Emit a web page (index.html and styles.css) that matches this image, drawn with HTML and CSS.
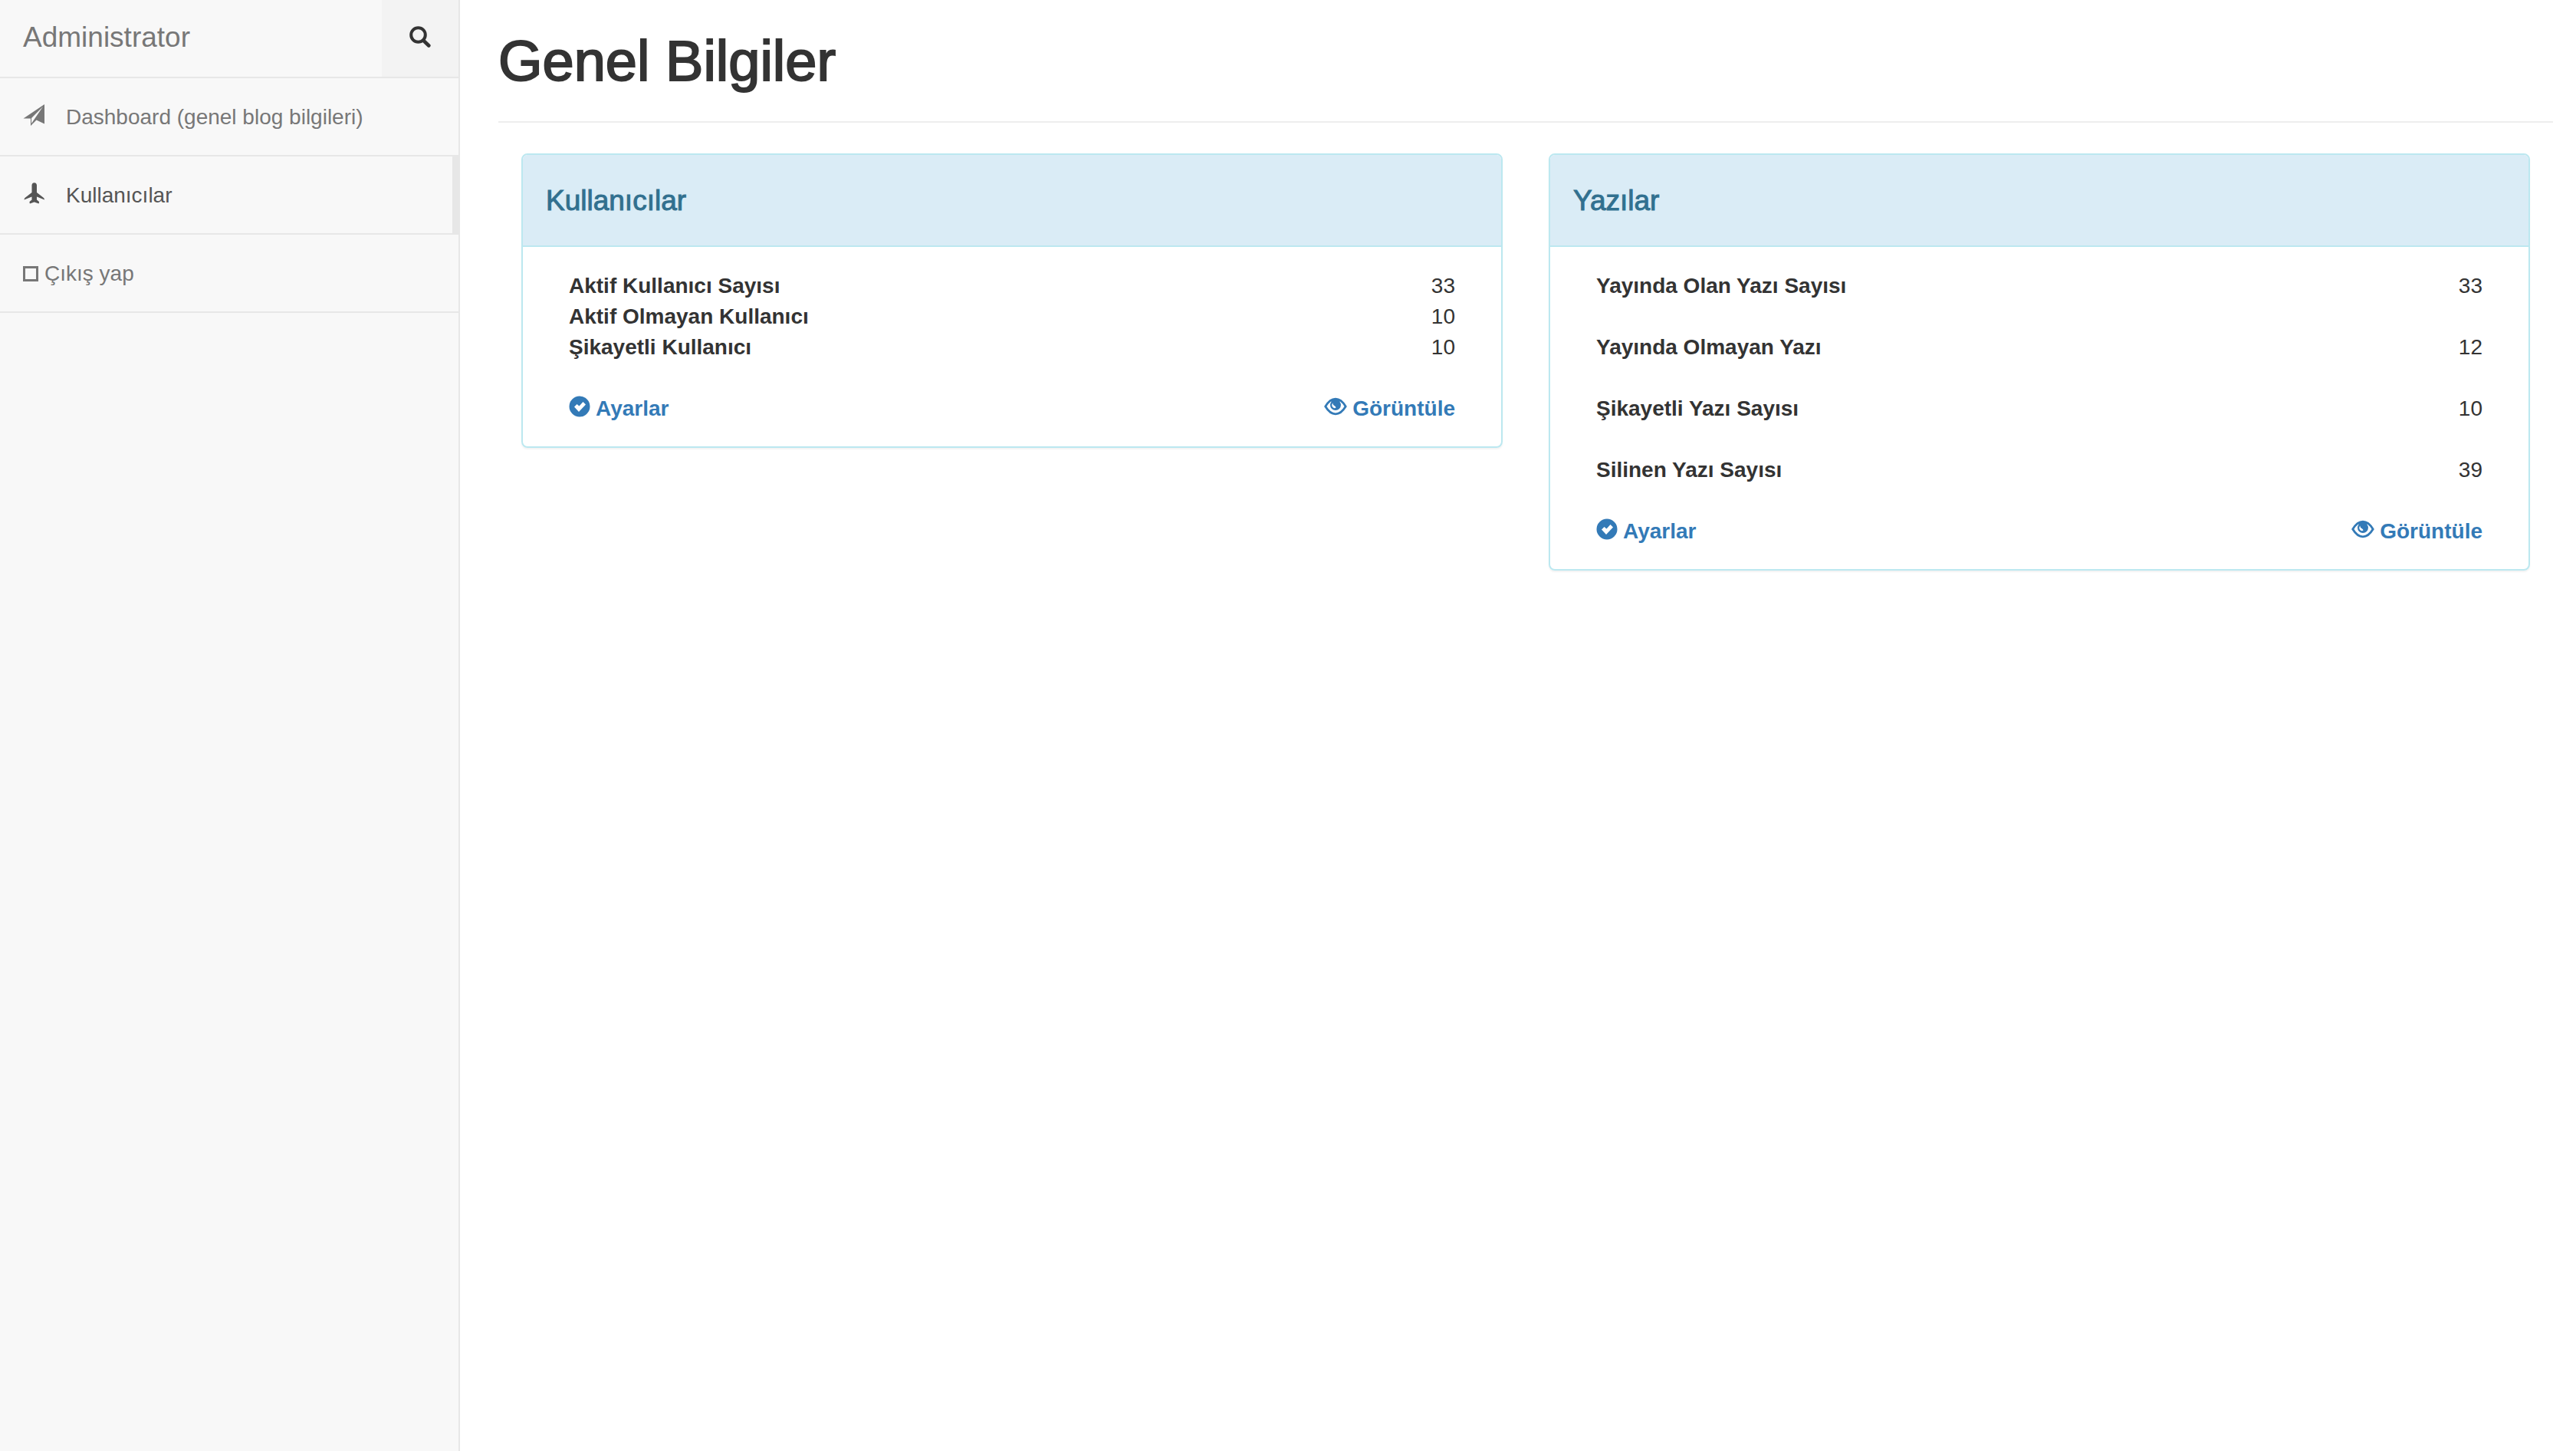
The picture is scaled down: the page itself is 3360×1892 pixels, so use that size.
FILE: index.html
```html
<!DOCTYPE html>
<html lang="tr">
<head>
<meta charset="utf-8">
<title>Genel Bilgiler</title>
<link rel="stylesheet" href="styles.css">
</head>
<body>
<svg class="sprite" aria-hidden="true">
  <symbol id="search" viewBox="0 0 28 28">
    <circle cx="11.500" cy="11.500" r="9.300" fill="none" stroke="currentColor" stroke-width="4"/>
    <path d="M18 18.500L25.300 25.500" fill="none" stroke="currentColor" stroke-width="4.600" stroke-linecap="round"/>
  </symbol>
  <symbol id="send" viewBox="0 0 28 28">
    <path d="M28 0V25.500L17.500 20.500L10 28V18.500L0.500 18.500ZM26 3L11 18V25Z" fill="currentColor" fill-rule="evenodd"/>
  </symbol>
  <symbol id="plane" viewBox="0 0 28 28">
    <path d="M11.500 3.500C11.500-1 18-1 18 3.500V13L27 20Q28 21 28 22.500L18 18.500V22.500L21 25Q21 27 20.500 27.500L14.700 25.500L9 27.500Q8.500 27 8.500 25L11.500 22.500V18.500L1.500 22.500Q1.500 21 2.500 20L11.500 13Z" fill="currentColor"/>
  </symbol>
  <symbol id="ok" viewBox="0 0 28 28">
    <path d="M14 0.500a13.500 13.500 0 1 0 0 27a13.500 13.500 0 1 0 0-27ZM7 14.500L10.500 11L13.500 13.500L18.500 8L22 11.500L13 21Z" fill="currentColor" fill-rule="evenodd"/>
  </symbol>
  <symbol id="eye" viewBox="0 0 30 28">
    <path d="M1.800 14C6 7 10.500 4.200 15 4.200S24 7 28.200 14C24 21 19.500 23.800 15 23.800S6 21 1.800 14Z" fill="none" stroke="currentColor" stroke-width="2.800"/>
    <path d="M8.500 5.500Q15 2 21.500 5.500L20.500 8Q22 10 22 12A7 7 0 0 1 8 12Q8 10 9.500 8ZM11.200 9.500Q9 13 12 15.500Q14 17 15.500 15.500Q15.500 14 13.500 13Q11.500 12 11.200 9.500Z" fill="currentColor" fill-rule="evenodd"/>
  </symbol>
</svg>
<div class="layout">
  <aside class="sidebar">
    <div class="brand-bar">
      <a class="brand" href="#">Administrator</a>
      <button class="search" type="button" aria-label="Ara"><svg class="icon"><use href="#search"/></svg></button>
    </div>
    <nav class="menu">
      <a class="menu-item" href="#"><svg class="icon"><use href="#send"/></svg>Dashboard (genel blog bilgileri)</a>
      <a class="menu-item active" href="#"><svg class="icon"><use href="#plane"/></svg>Kullanıcılar</a>
      <a class="menu-item compact" href="#"><span class="square"></span>Çıkış yap</a>
    </nav>
  </aside>
  <main class="content">
    <h1 class="page-header">Genel Bilgiler</h1>
    <div class="panels">
      <section class="panel">
        <h2 class="panel-heading">Kullanıcılar</h2>
        <div class="panel-body">
          <table class="stats">
            <tr><th scope="row">Aktif Kullanıcı Sayısı</th><td>33</td></tr>
            <tr><th scope="row">Aktif Olmayan Kullanıcı</th><td>10</td></tr>
            <tr><th scope="row">Şikayetli Kullanıcı</th><td>10</td></tr>
          </table>
          <div class="actions">
            <a href="#"><svg class="icon"><use href="#ok"/></svg>Ayarlar</a>
            <a href="#"><svg class="icon eye"><use href="#eye"/></svg>Görüntüle</a>
          </div>
        </div>
      </section>
      <section class="panel">
        <h2 class="panel-heading">Yazılar</h2>
        <div class="panel-body">
          <table class="stats spaced">
            <tr><th scope="row">Yayında Olan Yazı Sayısı</th><td>33</td></tr>
            <tr><th scope="row">Yayında Olmayan Yazı</th><td>12</td></tr>
            <tr><th scope="row">Şikayetli Yazı Sayısı</th><td>10</td></tr>
            <tr><th scope="row">Silinen Yazı Sayısı</th><td>39</td></tr>
          </table>
          <div class="actions">
            <a href="#"><svg class="icon"><use href="#ok"/></svg>Ayarlar</a>
            <a href="#"><svg class="icon eye"><use href="#eye"/></svg>Görüntüle</a>
          </div>
        </div>
      </section>
    </div>
  </main>
</div>
</body>
</html>
```
FILE: styles.css
```css
* { box-sizing: border-box; }

body {
  margin: 0;
  background: #fff;
  color: #333;
  font: 28px/40px "Helvetica Neue", "Liberation Sans", Arial, sans-serif;
}

a { color: #337ab7; text-decoration: none; }

.sprite { display: none; }
.icon { width: 28px; height: 28px; flex: none; }
.icon.eye { width: 30px; }

.layout { display: flex; min-height: 100vh; }

/* Sidebar */
.sidebar {
  flex: none;
  width: 600px;
  background: #f8f8f8;
  border-right: 2px solid #e7e7e7;
}
.brand-bar {
  display: flex;
  justify-content: space-between;
  border-bottom: 2px solid #e7e7e7;
}
.brand { padding: 29px 30px 31px; font-size: 37px; color: #777; }
.search {
  display: flex;
  align-items: center;
  justify-content: center;
  width: 100px;
  padding: 0 0 4px;
  border: 0;
  background: #f3f3f3;
  color: #333;
}
.menu-item {
  display: flex;
  gap: 28px;
  padding: 31px 30px 29px;
  border-bottom: 2px solid #e7e7e7;
  color: #777;
}
.menu-item .icon { margin-top: 3px; }
.menu-item.active {
  margin-right: -2px;
  border-right: 10px solid #e7e7e7;
  color: #555;
}
.menu-item.compact { align-items: center; gap: 8px; }
.square { width: 20px; height: 20px; border: 3px solid; }

/* Content */
.content { flex: 1; padding: 0 30px 0 50px; }
.page-header {
  margin: 0 0 40px;
  padding: 40px 0 38px;
  border-bottom: 2px solid #eee;
  font-size: 74px;
  line-height: 80px;
  font-weight: 500;
  -webkit-text-stroke: 2px;
}
.panels {
  display: grid;
  grid-template-columns: 1fr 1fr;
  align-items: start;
  gap: 60px;
  padding: 0 30px;
}
.panel {
  border: 2px solid #bce8f0;
  border-radius: 8px;
  box-shadow: 0 2px 2px rgba(0, 0, 0, .05);
}
.panel-heading {
  margin: 0;
  padding: 40px 30px 38px;
  border-bottom: 2px solid #bce8f0;
  border-radius: 6px 6px 0 0;
  background: #daecf6;
  color: #31708f;
  font-size: 37px;
  font-weight: 500;
  -webkit-text-stroke: 1px;
}
.panel-body { padding: 31px 60px 29px; }
.stats { width: 100%; border-collapse: collapse; }
.stats th, .stats td { padding: 0; text-align: left; }
.stats td { text-align: right; }
.stats.spaced tr + tr > * { padding-top: 40px; }
.actions {
  display: flex;
  justify-content: space-between;
  margin-top: 40px;
  font-weight: 700;
}
.actions a { display: flex; gap: 7px; }
.actions .icon { margin-top: 3px; }
```
